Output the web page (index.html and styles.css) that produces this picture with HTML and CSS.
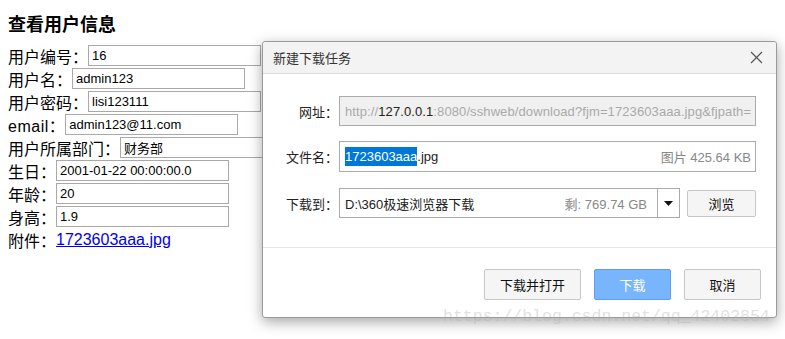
FILE: index.html
```html
<!DOCTYPE html>
<html lang="zh-CN">
  <head>
    <meta charset="UTF-8" />
    <title>查看用户信息</title>
    <link rel="stylesheet" href="styles.css">
  </head>
  <body>
    <div class="page">
      <h3 class="page-title">查看用户信息</h3>
      <div class="info-row"><span>用户编号：</span><input class="info-field" type="text" value="16"></div>
      <div class="info-row"><span>用户名：</span><input class="info-field" type="text" value="admin123"></div>
      <div class="info-row"><span>用户密码：</span><input class="info-field" type="text" value="lisi123111"></div>
      <div class="info-row"><span class="latin">email：</span><input class="info-field" type="text" value="admin123@11.com"></div>
      <div class="info-row"><span>用户所属部门：</span><input class="info-field" type="text" value="财务部"></div>
      <div class="info-row"><span>生日：</span><input class="info-field" type="text" value="2001-01-22 00:00:00.0"></div>
      <div class="info-row"><span>年龄：</span><input class="info-field" type="text" value="20"></div>
      <div class="info-row"><span>身高：</span><input class="info-field" type="text" value="1.9"></div>
      <div class="info-row"><span>附件：</span><a href="#" class="file-link">1723603aaa.jpg</a></div>
    </div>

    <div class="dl-dialog">
      <div class="dl-header">
        <span class="dl-title">新建下载任务</span>
        <svg class="dl-close" width="13" height="13" viewBox="0 0 13 13">
          <path d="M1 1 L12 12 M12 1 L1 12" stroke="#555" stroke-width="1.2" fill="none"/>
        </svg>
      </div>
      <div class="dl-body">
        <div class="dl-row dl-row-url">
          <label class="dl-label">网址：</label>
          <div class="dl-box dl-url"><span class="dl-url-text">http://<b>127.0.0.1</b>:8080/sshweb/download?fjm=1723603aaa.jpg&amp;fjpath=</span></div>
        </div>
        <div class="dl-row dl-row-name">
          <label class="dl-label">文件名：</label>
          <div class="dl-box dl-name">
            <span class="dl-name-text"><span class="sel">1723603aaa</span>.jpg</span>
            <span class="dl-meta">图片 425.64 KB</span>
          </div>
        </div>
        <div class="dl-row">
          <label class="dl-label">下载到：</label>
          <div class="dl-box dl-path">
            <span>D:\360极速浏览器下载</span>
            <span class="dl-meta">剩: 769.74 GB</span>
          </div>
          <div class="dl-arrow">
            <svg width="9" height="5" viewBox="0 0 9 5"><path d="M0 0 H9 L4.5 5 Z" fill="#111"/></svg>
          </div>
          <button class="dl-btn dl-browse">浏览</button>
        </div>
      </div>
      <div class="dl-footer">
        <button class="dl-btn dl-open">下载并打开</button>
        <button class="dl-btn dl-primary">下载</button>
        <button class="dl-btn">取消</button>
      </div>
    </div>

    <div class="watermark">https://blog.csdn.net/qq_42402854</div>
  </body>
</html>
```

FILE: styles.css
```css
body {
  margin: 0;
  background: #fff;
  font-family: "Liberation Sans", "Noto Sans CJK SC", sans-serif;
  color: #000;
}

.page {
  padding-left: 8px;
}
.page-title {
  margin: 0;
  padding-top: 13px;
  height: 44px;
  box-sizing: border-box;
  font-size: 18px;
  line-height: 24px;
  font-weight: bold;
}
.info-row {
  display: flex;
  align-items: center;
  height: 23px;
  font-size: 16px;
  white-space: nowrap;
}
.info-row .latin {
  letter-spacing: 0.5px;
}
.info-field {
  box-sizing: border-box;
  width: 173px;
  height: 21px;
  margin: 0;
  padding: 1px 3px;
  border: 1px solid #a9a9a9;
  font: 13px "Liberation Sans", "Noto Sans CJK SC", sans-serif;
  color: #000;
}
.file-link {
  color: #0000ee;
  text-decoration: underline;
}

.dl-dialog {
  position: absolute;
  left: 262px;
  top: 41px;
  width: 515px;
  height: 277px;
  box-sizing: border-box;
  background: #fff;
  border: 1px solid #9a9a9a;
  border-radius: 3px;
  box-shadow: 0 4px 14px rgba(0, 0, 0, 0.35);
  font-size: 13px;
  color: #222;
}
.dl-header {
  display: flex;
  align-items: center;
  justify-content: space-between;
  height: 31px;
  padding: 0 13px 0 10px;
  background: #f3f3f3;
  border-bottom: 1px solid #dcdcdc;
  border-radius: 3px 3px 0 0;
}
.dl-title {
  color: #333;
}
.dl-body {
  padding: 22px 0 0 0;
  height: 151px;
  border-bottom: 1px solid #e6e6e6;
}
.dl-row {
  display: flex;
  align-items: center;
  height: 30px;
}
.dl-row-url {
  margin-bottom: 15px;
}
.dl-row-name {
  height: 31px;
  margin-bottom: 16px;
}
.dl-label {
  width: 75px;
  padding-right: 1px;
  text-align: right;
  white-space: nowrap;
}
.dl-box {
  box-sizing: border-box;
  height: 31px;
  border: 1px solid #ababab;
  display: flex;
  align-items: center;
  padding: 0 4px 0 5px;
  white-space: nowrap;
}
.dl-url {
  width: 417px;
  height: 30px;
  background: #f0f0f0;
  color: #aaa;
}
.dl-url-text {
  letter-spacing: 0.1px;
}
.dl-url b {
  font-weight: normal;
  color: #222;
}
.dl-name {
  width: 417px;
  justify-content: space-between;
}
.dl-name-text .sel {
  background: #0078d7;
  color: #fff;
  padding: 2px 0;
}
.dl-meta {
  color: #888;
}
.dl-path {
  width: 319px;
  height: 30px;
  justify-content: space-between;
  padding-right: 10px;
}
.dl-arrow {
  box-sizing: border-box;
  width: 22px;
  height: 30px;
  border: 1px solid #ababab;
  border-left: none;
  display: flex;
  align-items: center;
  justify-content: center;
}
.dl-btn {
  box-sizing: border-box;
  height: 31px;
  width: 77px;
  border: 1px solid #c6c6c6;
  border-radius: 2px;
  background: #f5f5f5;
  font: 13px "Liberation Sans", "Noto Sans CJK SC", sans-serif;
  color: #111;
  padding: 0;
}
.dl-browse {
  width: 69px;
  height: 27px;
  margin-left: 7px;
}
.dl-footer {
  display: flex;
  justify-content: flex-end;
  gap: 13px;
  padding: 21px 15px 0 0;
}
.dl-open {
  width: 97px;
}
.dl-primary {
  background: #79b5fd;
  border-color: #5c9ee9;
  color: #fff;
}

.watermark {
  position: absolute;
  left: 443px;
  top: 307px;
  font: 16.5px "Liberation Mono", monospace;
  color: rgba(175, 175, 175, 0.4);
  white-space: nowrap;
}
```
